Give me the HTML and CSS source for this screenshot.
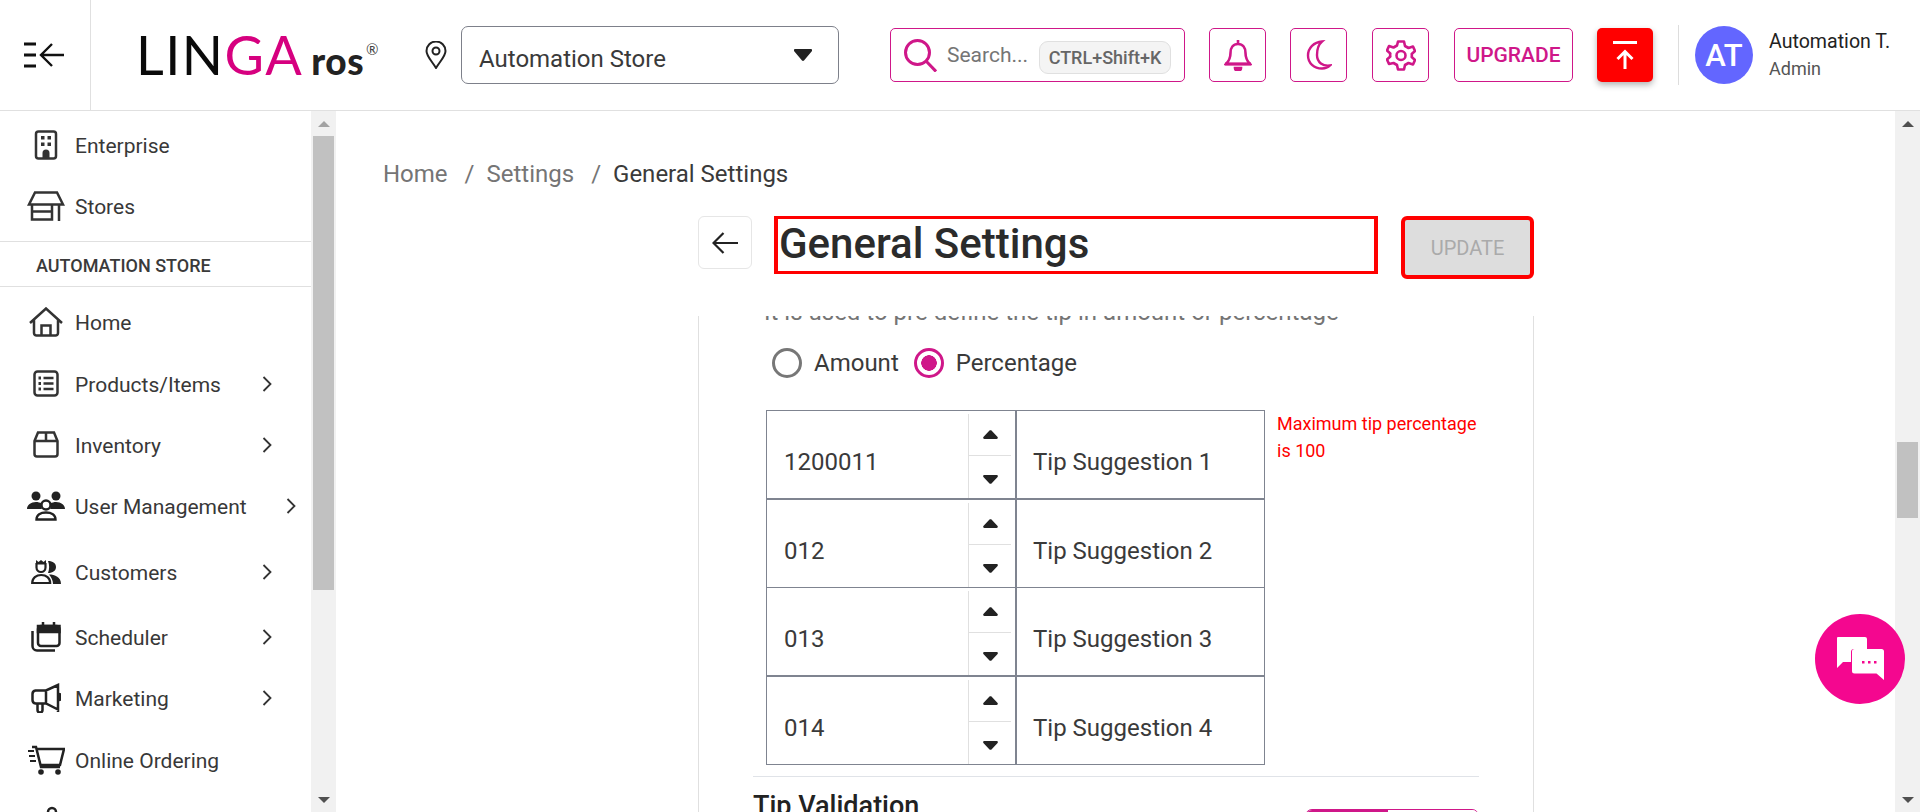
FILE: index.html
```html
<!DOCTYPE html>
<html lang="en">
<head>
<meta charset="utf-8">
<title>General Settings</title>
<link rel="stylesheet" href="styles.css">
</head>
<body>
<div class="app">
  <header class="topbar">
    <div class="menu-cell">
      <svg class="ico" width="40" height="26" viewBox="0 0 40 26" fill="none" stroke="#111" stroke-width="2.4"><path d="M0 2h12M0 13h12M0 24h12" stroke-width="3"/><path d="M40 13H18M28 2 17 13l11 11"/></svg>
    </div>
    <div class="logo"><span class="logo-black">LIN</span><span class="logo-pink">GA</span><span class="logo-ros">ros</span><span class="logo-reg">®</span></div>
    <svg class="ico pin" width="22" height="28" viewBox="0 0 22 28" fill="none" stroke="#222" stroke-width="2"><path d="M11 27C6 19 1.500 15 1.500 10a9.500 9.500 0 0 1 19 0c0 5-4.500 9-9.500 17Z"/><circle cx="11" cy="10" r="3.500"/></svg>
    <div class="store-select"><span>Automation Store</span><svg class="ico" width="18" height="12" viewBox="0 0 18 12" fill="#222"><path d="M1 0h16c1 0 1.500 1 1 2l-8 9.500c-.5.6-1.500.6-2 0L0 2c-.5-1 0-2 1-2Z"/></svg></div>
    <div class="search">
      <svg class="ico" width="33" height="33" viewBox="0 0 33 33" fill="none" stroke="#cf1789" stroke-width="3"><circle cx="13.500" cy="13.500" r="12"/><path d="m22 22 10 10.500"/></svg>
      <span class="search-text">Search...</span>
      <span class="kbd">CTRL+Shift+K</span>
    </div>
    <button class="tool tool-bell"><svg class="ico" width="28" height="32" viewBox="0 0 28 32" fill="none" stroke="#cf1789" stroke-width="2.600"><path d="M14 1v4M14 5c-5 0-7.500 4-7.500 9 0 5-1.500 8-4.500 11h24c-3-3-4.500-6-4.500-11 0-5-2.500-9-7.500-9Z"/><path d="M1 25h26" stroke-width="3"/><path d="M11 29a3 3 0 0 0 6 0Z" fill="#cf1789"/></svg></button>
    <button class="tool tool-moon"><svg class="ico" width="26" height="30" viewBox="0 0 26 30" fill="none" stroke="#cf1789" stroke-width="2.400"><path d="M16 1.500C8 2 2 8 2 15.500s6 13 14 13c3.500 0 6-1 8-3-7 1-13-3-13-10.500S13 4 16 1.500Z"/></svg></button>
    <button class="tool tool-gear"><svg class="ico" width="30" height="31" viewBox="0 0 30 31" fill="none" stroke="#cf1789" stroke-width="2.600"><path d="M12 1.500h6l1 4.500 3.500 2 4.500-1.500 2 4.500-3.300 3c.2 1 .2 2 0 3l3.300 3-2 4.500-4.500-1.500-3.500 2-1 4.500h-6l-1-4.500-3.500-2L3 24l-2-4.500 3.300-3c-.2-1-.2-2 0-3L1 10.500 3 6l4.500 1.500 3.500-2Z" stroke-linejoin="round"/><circle cx="15" cy="15.500" r="4.500"/></svg></button>
    <button class="upgrade">UPGRADE</button>
    <button class="publish"><svg class="ico" width="24" height="28" viewBox="0 0 24 28" fill="none" stroke="#fff" stroke-width="3"><path d="M0 1.500h24M12 28V11M4.500 18 12 10.500 19.500 18"/></svg></button>
    <div class="vrule"></div>
    <div class="avatar">AT</div>
    <div class="user"><div class="user-name">Automation T.</div><div class="user-role">Admin</div></div>
  </header>

  <div class="body-row">
    <aside class="sidebar">
      <nav class="nav">
        <a class="nav-item nav-first"><span class="nav-ico"><svg class="ico" width="24" height="30" viewBox="0 0 24 30" fill="none" stroke="#333" stroke-width="2.500"><rect x="2" y="1.500" width="20" height="27" rx="2.500"/><path fill="#333" stroke="none" d="M7 6h3.500v3.500H7zM13.500 6H17v3.500h-3.500zM7 12.500h3.500V16H7zM13.500 12.500H17V16h-3.500zM8.500 29v-6a3 3 0 0 1 7 0v6z"/></svg></span><span class="nav-text">Enterprise</span></a>
        <a class="nav-item"><span class="nav-ico"><svg class="ico" width="38" height="30" viewBox="0 0 38 30" fill="none" stroke="#333" stroke-width="2.500"><path d="M8 1.500h22l6 12H2ZM5 13.500v15h20v-15M5 20.500h20M32 13.500V30"/></svg></span><span class="nav-text">Stores</span></a>
      </nav>
      <div class="store-label">AUTOMATION STORE</div>
      <nav class="nav nav-store">
        <a class="nav-item"><span class="nav-ico"><svg class="ico" width="34" height="30" viewBox="0 0 34 30" fill="none" stroke="#333" stroke-width="2.500"><path d="M1 16 17 1.500 33 16M5 13v13a2.500 2.500 0 0 0 2.500 2.500h19A2.500 2.500 0 0 0 29 26V13M12.500 28.500V18.500h9v10"/></svg></span><span class="nav-text">Home</span></a>
        <a class="nav-item nav-gap1"><span class="nav-ico"><svg class="ico" width="26" height="27" viewBox="0 0 26 27" fill="none" stroke="#333" stroke-width="2.500"><rect x="1.500" y="1.500" width="23" height="24" rx="3"/><path d="M10.500 8h10M10.500 13.500h10M10.500 19h10"/><path fill="#333" stroke="none" d="M5.500 6.500H8v3H5.500zM5.500 12H8v3H5.500zM5.500 17.500H8v3H5.500z"/></svg></span><span class="nav-text">Products/Items</span><svg class="chev" width="10" height="16" viewBox="0 0 10 16" fill="none" stroke="#333" stroke-width="1.800"><path d="m1.500 1 7 7-7 7"/></svg></a>
        <a class="nav-item"><span class="nav-ico"><svg class="ico" width="26" height="27" viewBox="0 0 26 27" fill="none" stroke="#333" stroke-width="2.500"><path d="M1.500 10 5 1.500h16l3.500 8.500v13a2.500 2.500 0 0 1-2.500 2.500H4A2.500 2.500 0 0 1 1.500 23ZM1.500 10h23M13 1.500V10"/></svg></span><span class="nav-text">Inventory</span><svg class="chev" width="10" height="16" viewBox="0 0 10 16" fill="none" stroke="#333" stroke-width="1.800"><path d="m1.500 1 7 7-7 7"/></svg></a>
        <a class="nav-item"><span class="nav-ico"><svg class="ico" width="38" height="30" viewBox="0 0 38 30" fill="none"><g fill="#222"><circle cx="9" cy="5" r="4.500"/><circle cx="29" cy="5" r="4.500"/><path d="M0 18c0-4 4-7 9-7 2 0 4 .5 5.500 1.500-1 2-.5 4 .5 5.500ZM38 18c0-4-4-7-9-7-2 0-4 .5-5.500 1.500 1 2 .5 4-.5 5.500Z"/></g><g stroke="#222" stroke-width="2.400"><circle cx="19" cy="14" r="4.500"/><path d="M9.500 28.500c0-4.500 4-7 9.500-7s9.500 2.500 9.500 7Z"/></g></svg></span><span class="nav-text">User Management</span><svg class="chev chev-far" width="10" height="16" viewBox="0 0 10 16" fill="none" stroke="#333" stroke-width="1.800"><path d="m1.500 1 7 7-7 7"/></svg></a>
        <a class="nav-item nav-gap5"><span class="nav-ico"><svg class="ico" width="30" height="25" viewBox="0 0 30 25" fill="none"><path d="M5 1l2.500 2L10 1l2.500 2L15 1v4.500H5Z" fill="#222"/><path d="M5.500 4v4.500a4.500 4.500 0 0 0 9 0V4" stroke="#222" stroke-width="2.200"/><path d="M17 2c5 0 8 2.500 8 6s-3 6-8 6c1.500-4 1.500-8 0-12Z" fill="#222"/><path d="M1.200 24c0-5 4-8 9-8s9 3 9 8Z" stroke="#222" stroke-width="2.200"/><path d="M18 15.500c6 0 12 2.500 12 9.500h-8c0-4-2-7-4-9.500Z" fill="#222"/></svg></span><span class="nav-text">Customers</span><svg class="chev" width="10" height="16" viewBox="0 0 10 16" fill="none" stroke="#333" stroke-width="1.800"><path d="m1.500 1 7 7-7 7"/></svg></a>
        <a class="nav-item nav-gap4"><span class="nav-ico"><svg class="ico" width="30" height="30" viewBox="0 0 30 30" fill="none" stroke="#222" stroke-width="2.500"><path d="M1.500 9v15a4.500 4.500 0 0 0 4.500 4.500h18"/><rect x="7" y="4" width="21.500" height="20" rx="3"/><path d="M7 4h21.500v6H7z" fill="#222"/><path d="M12 0v5M23 0v5"/></svg></span><span class="nav-text">Scheduler</span><svg class="chev" width="10" height="16" viewBox="0 0 10 16" fill="none" stroke="#333" stroke-width="1.800"><path d="m1.500 1 7 7-7 7"/></svg></a>
        <a class="nav-item"><span class="nav-ico"><svg class="ico" width="30" height="30" viewBox="0 0 30 30" fill="none" stroke="#222" stroke-width="2.500"><path d="M27 2 15 7.500H4.500A3.500 3.500 0 0 0 1.500 11v6A3.500 3.500 0 0 0 4.500 20.500H15l12 6ZM27 1v28M6.500 20.500v6.500a2.500 2.500 0 0 0 5 0v-6.500M15 7.500v13"/><path d="M28 11a3 3 0 0 1 0 6Z" fill="#222"/></svg></span><span class="nav-text">Marketing</span><svg class="chev" width="10" height="16" viewBox="0 0 10 16" fill="none" stroke="#333" stroke-width="1.800"><path d="m1.500 1 7 7-7 7"/></svg></a>
        <a class="nav-item nav-gap1"><span class="nav-ico"><svg class="ico" width="38" height="30" viewBox="0 0 38 30" fill="none" stroke="#222" stroke-width="2.500"><path d="M5 2h4l5 20h19M10 4h27l-4 16H13"/><path d="M1 6h6M2 11h6M3 16h6" stroke-width="2"/><circle cx="14" cy="27" r="2.800" fill="#222" stroke="none"/><circle cx="31" cy="27" r="2.800" fill="#222" stroke="none"/></svg></span><span class="nav-text">Online Ordering</span></a>
        <a class="nav-item"><span class="nav-ico"><svg class="ico" width="30" height="30" viewBox="0 0 30 30" fill="none" stroke="#222" stroke-width="2.500"><circle cx="21" cy="6" r="4"/><path d="M8 28 18 9"/></svg></span></a>
      </nav>
    </aside>
    <div class="scrollbar scrollbar-side">
      <span class="sb-up sb-up-dim"></span>
      <span class="sb-thumb sb-thumb-side"></span>
      <span class="sb-down"></span>
    </div>

    <main class="main">
      <div class="crumbs"><span class="crumb">Home</span><span class="crumb-sep">/</span><span class="crumb">Settings</span><span class="crumb-sep">/</span><span class="crumb-now">General Settings</span></div>
      <div class="page">
        <div class="title-row">
          <button class="back"><svg class="ico" width="26" height="22" viewBox="0 0 26 22" fill="none" stroke="#222" stroke-width="2.200"><path d="M26 11H2M11.500 1 1.500 11l10 10"/></svg></button>
          <h1 class="title">General Settings</h1>
          <button class="update">UPDATE</button>
        </div>
        <section class="card">
          <p class="card-note">It is used to pre define the tip in amount or percentage</p>
          <div class="radios">
            <span class="radio"></span><span class="radio-label">Amount</span>
            <span class="radio radio-on"></span><span class="radio-label">Percentage</span>
          </div>
          <div class="tips-row">
            <div class="tips">
              <div class="tip tip-thick"><div class="tip-num"><span class="tip-val">1200011</span><span class="spin"><span class="spin-btn"><svg class="ico" width="15" height="9" viewBox="0 0 15 9" fill="#222"><path d="M6.500.6c.5-.6 1.500-.6 2 0L14.600 7c.5.800.2 2-1 2H1.400C.2 9-.1 7.800.4 7Z"/></svg></span><span class="spin-btn spin-dn"><svg class="ico" width="15" height="9" viewBox="0 0 15 9" fill="#222"><path d="M6.500 8.400c.5.600 1.500.6 2 0L14.600 2c.5-.8.2-2-1-2H1.400C.2 0-.1 1.200.4 2Z"/></svg></span></span></div><div class="tip-name">Tip Suggestion 1</div></div>
              <div class="tip"><div class="tip-num"><span class="tip-val">012</span><span class="spin"><span class="spin-btn"><svg class="ico" width="15" height="9" viewBox="0 0 15 9" fill="#222"><path d="M6.500.6c.5-.6 1.500-.6 2 0L14.600 7c.5.800.2 2-1 2H1.400C.2 9-.1 7.800.4 7Z"/></svg></span><span class="spin-btn spin-dn"><svg class="ico" width="15" height="9" viewBox="0 0 15 9" fill="#222"><path d="M6.500 8.400c.5.600 1.500.6 2 0L14.600 2c.5-.8.2-2-1-2H1.400C.2 0-.1 1.200.4 2Z"/></svg></span></span></div><div class="tip-name">Tip Suggestion 2</div></div>
              <div class="tip tip-thick"><div class="tip-num"><span class="tip-val">013</span><span class="spin"><span class="spin-btn"><svg class="ico" width="15" height="9" viewBox="0 0 15 9" fill="#222"><path d="M6.500.6c.5-.6 1.500-.6 2 0L14.600 7c.5.800.2 2-1 2H1.400C.2 9-.1 7.800.4 7Z"/></svg></span><span class="spin-btn spin-dn"><svg class="ico" width="15" height="9" viewBox="0 0 15 9" fill="#222"><path d="M6.500 8.400c.5.600 1.500.6 2 0L14.600 2c.5-.8.2-2-1-2H1.400C.2 0-.1 1.200.4 2Z"/></svg></span></span></div><div class="tip-name">Tip Suggestion 3</div></div>
              <div class="tip tip-last"><div class="tip-num"><span class="tip-val">014</span><span class="spin"><span class="spin-btn"><svg class="ico" width="15" height="9" viewBox="0 0 15 9" fill="#222"><path d="M6.500.6c.5-.6 1.500-.6 2 0L14.600 7c.5.800.2 2-1 2H1.400C.2 9-.1 7.800.4 7Z"/></svg></span><span class="spin-btn spin-dn"><svg class="ico" width="15" height="9" viewBox="0 0 15 9" fill="#222"><path d="M6.500 8.400c.5.600 1.500.6 2 0L14.600 2c.5-.8.2-2-1-2H1.400C.2 0-.1 1.200.4 2Z"/></svg></span></span></div><div class="tip-name">Tip Suggestion 4</div></div>
            </div>
            <p class="tip-error">Maximum tip percentage is 100</p>
          </div>
          <hr class="rule">
          <div class="validation">
            <h2 class="validation-title">Tip Validation</h2>
            <div class="toggle"><span class="toggle-on"></span><span class="toggle-off"></span></div>
          </div>
        </section>
      </div>
    </main>
    <div class="scrollbar scrollbar-main">
      <span class="sb-up"></span>
      <span class="sb-thumb sb-thumb-main"></span>
      <span class="sb-down"></span>
    </div>
  </div>

  <button class="chat"><svg width="48" height="44" viewBox="0 0 48 44" fill="#fff"><path d="M2 0h27a2 2 0 0 1 2 2v10H18a3 3 0 0 0-3 3v10H7l-6 6V1a1 1 0 0 1 1-1Z"/><path d="M18.500 12h27a2.500 2.500 0 0 1 2.500 2.500V43l-7.500-6.500h-22A2.500 2.500 0 0 1 16 34V14.500a2.500 2.500 0 0 1 2.500-2.500Z"/><path d="M26 24h2.500v2.500H26zM32 24h2.500v2.500H32zM38 24h2.500v2.500H38z" fill="#f4078f"/></svg></button>
</div>
</body>
</html>
```
FILE: styles.css
```css
* { box-sizing: border-box; }
html, body { margin: 0; height: 100%; overflow: hidden; background: #fff; }
body { font-family: Roboto, "Liberation Sans", sans-serif; color: #333; }
button { font-family: inherit; cursor: pointer; padding: 0; }
h1, h2, p { margin: 0; font-weight: inherit; }
.ico { display: block; flex: none; }

.app { position: relative; height: 100vh; display: flex; flex-direction: column; overflow: hidden; }

/* top bar */
.topbar { flex: none; height: 111px; border-bottom: 1px solid #e0e0e0; display: flex; align-items: center; }
.menu-cell { flex: none; width: 91px; height: 100%; border-right: 1px solid #e0e0e0; padding-left: 24px; display: flex; align-items: center; }
.logo { flex: none; width: 247px; margin-left: 45px; display: flex; align-items: baseline; font-family: Lato, sans-serif; font-size: 54px; line-height: 1; letter-spacing: 1.500px; }
.logo-black { color: #0a0a0a; font-weight: 400; }
.logo-pink { color: #d6007f; font-weight: 400; }
.logo-ros { color: #222; font-size: 37px; font-weight: 900; margin-left: 8px; letter-spacing: .5px; }
.logo-reg { color: #444; font-size: 15px; align-self: flex-start; margin-top: 14px; margin-left: 2px; letter-spacing: 0; }
.pin { margin-left: 42px; margin-right: 14px; }
.store-select { flex: none; width: 378px; height: 58px; border: 1px solid #7d808a; border-radius: 7px; display: flex; align-items: center; justify-content: space-between; padding: 0 26px 0 17px; font-size: 24px; color: #3a3a3a; }
.store-select span { padding-top: 8px; }
.search { flex: none; width: 295px; height: 54px; margin-left: 51px; border: 1px solid #cf1789; border-radius: 5px; display: flex; align-items: center; padding-left: 13px; }
.search-text { margin-left: 10px; font-size: 21px; color: #757575; }
.kbd { margin: 4px 13px 0 auto; width: 132px; height: 33px; padding-top: 1px; border: 1px solid #e0e0e0; border-radius: 9px; background: #f4f4f4; font-size: 18px; font-weight: 500; color: #666; display: flex; align-items: center; justify-content: center; white-space: nowrap; }
.tool { flex: none; width: 57px; height: 54px; margin-left: 25px; border: 1px solid #cf1789; border-radius: 5px; background: #fff; display: flex; align-items: center; justify-content: center; }
.tool-bell { margin-left: 24px; }
.tool-moon { margin-left: 24px; }
.upgrade { flex: none; width: 119px; height: 54px; margin-left: 25px; border: 1px solid #cf1789; border-radius: 5px; background: #fff; color: #cf1789; font-size: 21px; font-weight: 500; }
.publish { flex: none; width: 56px; height: 54px; margin-left: 24px; border: 0; border-radius: 5px; background: #f00; box-shadow: 0 3px 6px rgba(0,0,0,.3); display: flex; align-items: center; justify-content: center; }
.vrule { flex: none; width: 1px; height: 60px; margin-left: 25px; background: #ddd; }
.avatar { flex: none; width: 58px; height: 58px; margin-left: 16px; border-radius: 50%; background: #6366ff; color: #fff; font-size: 31px; font-weight: 500; display: flex; align-items: center; justify-content: center; }
.user { margin-left: 16px; display: flex; flex-direction: column; gap: 4px; white-space: nowrap; }
.user-name { font-size: 19.600px; line-height: 24px; color: #222; }
.user-role { font-size: 18px; line-height: 22px; color: #555; }

/* shell */
.body-row { flex: 1; min-height: 0; display: flex; }
.sidebar { flex: none; width: 311px; overflow: hidden; }
.nav { display: flex; flex-direction: column; }
.nav-first { margin-top: 3px; height: 61px; }
.nav-store { padding-top: 4px; }
.nav-item { flex: none; display: flex; align-items: center; font-size: 21px; color: #383838; white-space: nowrap; }
.nav .nav-item { min-height: 61px; }
.nav-item:not(.nav-first) { height: 62px; }
.nav-text { padding-top: 2px; }
.nav-store .nav-item { height: 61px; }
.nav-gap1 { margin-top: 1px; }
.nav-gap4 { margin-top: 4px; }
.nav-gap5 { margin-top: 5px; }
.nav-ico { flex: none; width: 75px; padding-left: 26px; display: flex; justify-content: center; padding-right: 10px; }
.chev { flex: none; position: absolute; left: 262px; }
.chev-far { left: 286px; }
.store-label { margin-top: 4px; height: 46px; padding-top: 3px; border-top: 1px solid #e0e0e0; border-bottom: 1px solid #e0e0e0; padding-left: 36px; display: flex; align-items: center; font-size: 18px; font-weight: 500; color: #3a3a3a; }

.scrollbar { flex: none; width: 25px; background: #f1f1f1; display: flex; flex-direction: column; align-items: center; }
.scrollbar-side { margin-right: 1px; }
.sb-up, .sb-down { flex: none; width: 25px; height: 25px; display: flex; align-items: center; justify-content: center; }
.sb-up::before { content: ""; border-left: 6px solid transparent; border-right: 6px solid transparent; border-bottom: 6px solid #505050; }
.sb-down { margin-top: auto; }
.sb-down::before { content: ""; border-left: 6px solid transparent; border-right: 6px solid transparent; border-top: 6px solid #505050; }
.sb-up-dim::before { border-bottom-color: #a3a3a3; }
.sb-thumb { flex: none; width: 21px; background: #c1c1c1; }
.sb-thumb-side { height: 454px; }
.sb-thumb-main { height: 76px; margin-top: 306px; }

/* main */
.main { flex: 1; min-width: 0; overflow: hidden; }
.crumbs { padding: 48px 0 0 46px; height: 105px; display: flex; align-items: flex-start; line-height: 31px; font-size: 24px; }
.crumb { color: #757575; }
.crumb-sep { color: #757575; margin: 0 12px 0 17px; }
.crumb-now { color: #3a3a3a; }
.page { width: 836px; margin: 0 auto; }
.title-row { height: 100px; display: flex; align-items: flex-start; }
.back { flex: none; width: 54px; height: 53px; border: 1px solid #e6e6e6; border-radius: 6px; background: #fff; display: flex; align-items: center; justify-content: center; }
.title { flex: none; width: 604px; height: 58px; margin-left: 22px; border: 4px solid #f00; border-width: 3.500px 4px; padding-left: 1px; font-size: 42px; line-height: 50px; font-weight: 500; color: #2b2b2b; white-space: nowrap; }
.update { flex: none; width: 133px; height: 63px; margin-left: 23px; border: 4px solid #f00; border-radius: 6px; background: #ddd; color: #aaa; font-size: 20px; font-weight: 400; }
.card { border: 1px solid #e0e0e0; border-width: 0 1px; padding: 0 54px; overflow: hidden; height: 500px; }
.card-note { margin: -18px 0 0 11px; font-size: 24px; line-height: 28px; color: #757575; white-space: nowrap; }
.radios { margin: 22px 0 0 19px; height: 30px; display: flex; align-items: center; }
.radio { flex: none; width: 30px; height: 30px; border: 3px solid #777; border-radius: 50%; }
.radio-on { border-color: #cf1789; background: radial-gradient(circle, #cf1789 0 7.500px, transparent 8px); margin-left: 15px; }
.radio-label { margin-left: 12px; font-size: 24px; color: #3a3a3a; }
.tips-row { margin: 32px 0 0 13px; display: flex; align-items: flex-start; }
.tips { flex: none; width: 499px; border: 1px solid #7f8490; }
.tip { height: 88px; display: flex; border-bottom: 1px solid #7f8490; }
.tip-thick { height: 89px; border-bottom-width: 2px; }
.tip-last { height: 87px; border-bottom: 0; }
.tip-num { flex: none; width: 250px; display: flex; border-right: 2px solid #7f8490; }
.tip-val { flex: 1; padding: 15px 0 0 17px; display: flex; align-items: center; font-size: 24px; color: #3a3a3a; }
.spin { flex: none; width: 43px; margin: 3px 4px 0 0; border-left: 1px solid #e0e0e0; display: flex; flex-direction: column; }
.spin-btn { flex: none; height: 41px; display: flex; align-items: center; justify-content: center; }
.spin-dn { height: 43px; border-top: 1px solid #e0e0e0; padding-top: 5px; }
.tip-name { flex: 1; padding: 15px 0 0 16px; display: flex; align-items: center; font-size: 24px; color: #3a3a3a; }
.tip-error { flex: none; width: 204px; margin: 0 0 0 12px; color: #f00; font-size: 18px; line-height: 27px; }
.rule { margin: 11px 0 0; border: 0; border-top: 1px solid #e0e3e8; }
.validation { display: flex; justify-content: space-between; align-items: flex-start; padding-top: 13px; }
.validation-title { font-size: 27px; line-height: 32px; font-weight: 500; color: #222; white-space: nowrap; }
.toggle { flex: none; width: 174px; height: 40px; margin-top: 19px; border: 1px solid #cf1789; border-radius: 7px; display: flex; overflow: hidden; }
.toggle-on { width: 82px; background: #cf1789; }
.toggle-off { flex: 1; background: #fff; }

.chat { position: absolute; left: 1815px; top: 614px; width: 90px; height: 90px; border: 0; border-radius: 50%; background: #f4078f; display: flex; align-items: center; justify-content: center; }
```
